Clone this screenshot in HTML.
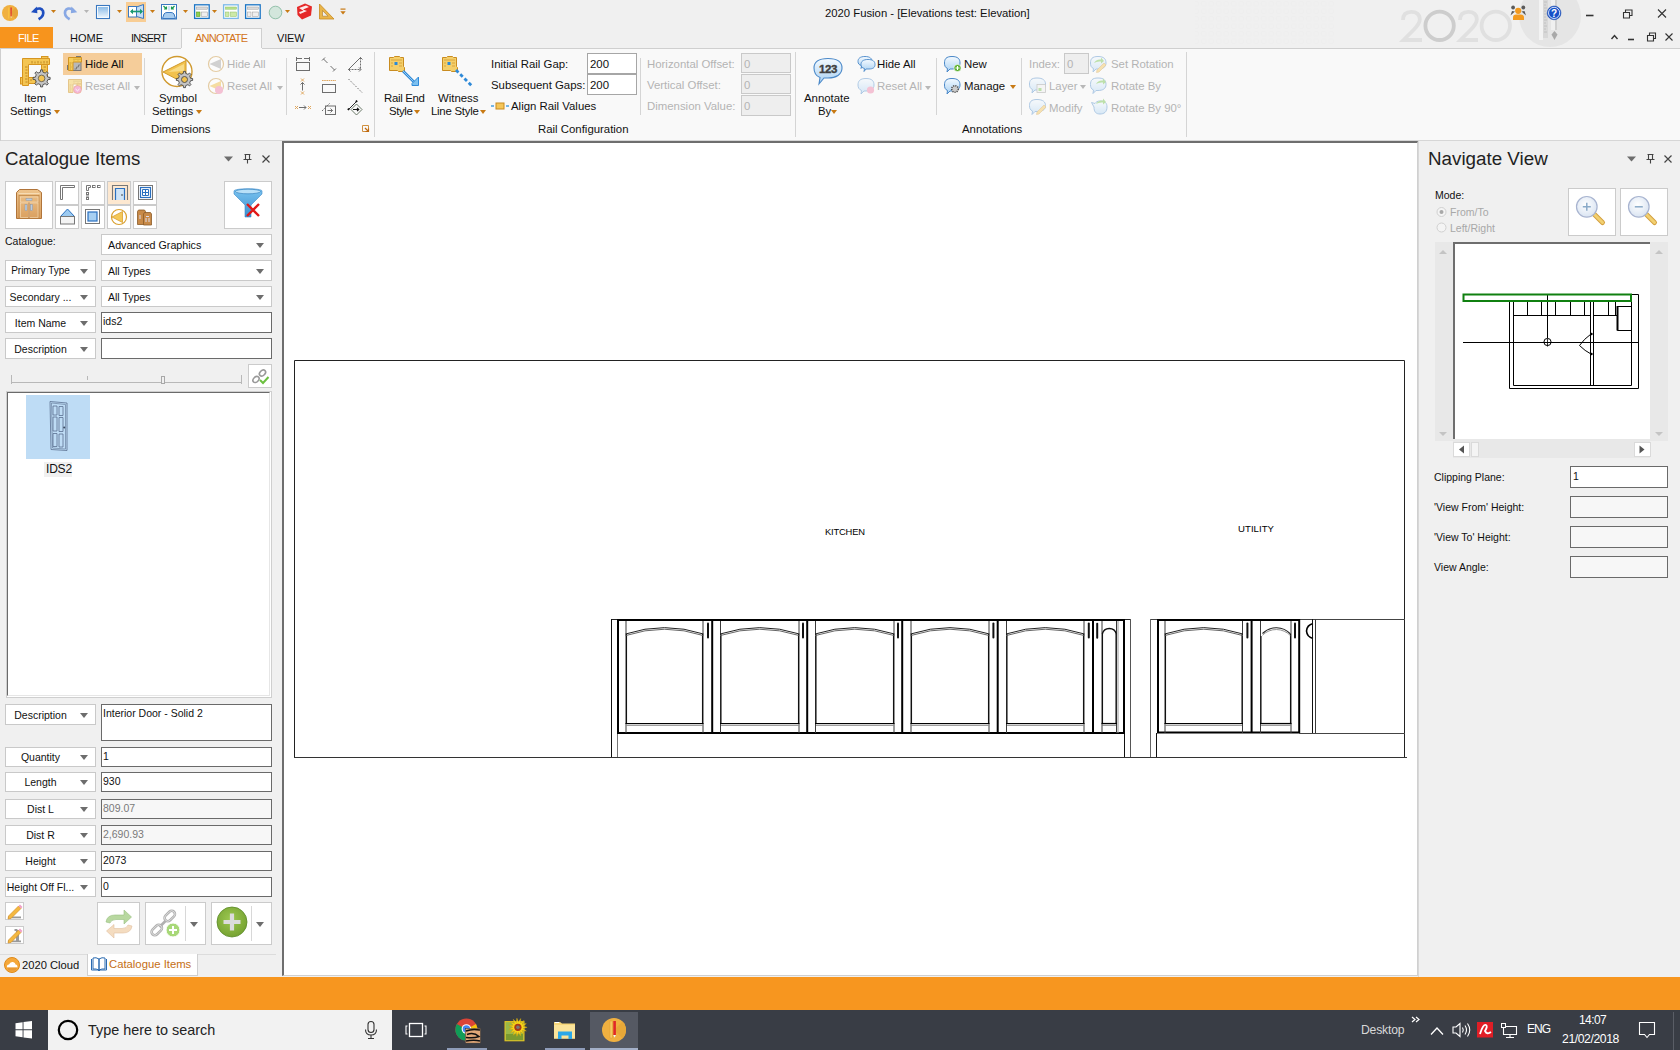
<!DOCTYPE html>
<html><head><meta charset="utf-8">
<style>
*{box-sizing:border-box;margin:0;padding:0}
html,body{width:1680px;height:1050px;overflow:hidden;background:#f0f0f0;font-family:"Liberation Sans",sans-serif;color:#111}
.a{position:absolute}
.t{position:absolute;white-space:nowrap;font-size:11.4px;line-height:14px}
.dis{color:#b4b4b4}
.sep{position:absolute;width:1px;background:#d5d5d5}
.inp{position:absolute;background:#fff;border:1px solid #7a7a7a}
.dd{position:absolute;background:#fff;border:1px solid #c9c9c9}
.arr{position:absolute;width:0;height:0;border-left:5px solid transparent;border-right:5px solid transparent;border-top:5px solid #555}
.oarr{position:absolute;width:0;height:0;border-left:3px solid transparent;border-right:3px solid transparent;border-top:3px solid #c87a14}
</style></head>
<body>
<!-- title bar -->
<div class="a" id="titlebar" style="left:0;top:0;width:1680px;height:48px;background:#f0f0f0"></div>
<div class="t" style="left:825px;top:6px;font-size:11.3px">2020 Fusion - [Elevations test: Elevation]</div>


<!-- QAT -->
<svg class="a" style="left:0;top:0" width="360" height="27" viewBox="0 0 360 27">
 <circle cx="10" cy="13" r="8" fill="#f0b040"/>
 <path d="M10 13 L15.7 7.3 A8 8 0 0 1 15.7 18.7 Z" fill="#e6a43a"/>
 <rect x="8" y="7.5" width="1.3" height="11" fill="#f8c040"/>
 <path d="M10.4 7.5 h1.4 l-.2 9 h-1z" fill="#e03030"/>
 <path d="M10.6 16.5 h1 l-.5 1.8z" fill="#fff"/>
 <path d="M31 12.3 L36.8 6.6 L37.4 13.2 Z" fill="#1f4fc0"/>
 <path d="M35.5 9.6 Q41 6.8 43 11 Q44.6 16 38.6 19.2" fill="none" stroke="#1f4fc0" stroke-width="2.7"/>
 <path d="M51 10 L56 10 L53.5 13 Z" fill="#c87a14"/>
 <path d="M77.25 12.3 L71.45 6.6 L70.85 13.2 Z" fill="#88a8e4"/>
 <path d="M72.75 9.6 Q67.25 6.8 65.25 11 Q63.65 16 69.65 19.2" fill="none" stroke="#88a8e4" stroke-width="2.7"/>
 <path d="M84 10 L89 10 L86.5 13 Z" fill="#b5b5b5"/>
 <defs><linearGradient id="qb" x1="0" y1="0" x2="0" y2="1"><stop offset="0" stop-color="#8cbce8"/><stop offset="1" stop-color="#e6f2fc"/></linearGradient></defs>
 <rect x="96.5" y="5.5" width="13" height="13" fill="#fff" stroke="#3a78c0" stroke-width="1.1"/>
 <rect x="98" y="7" width="10" height="10" fill="url(#qb)"/>
 <path d="M117 10 L122 10 L119.5 13 Z" fill="#c87a14"/>
 <rect x="126" y="2" width="20" height="20" fill="#f8cd94"/>
 <rect x="128.5" y="6.5" width="8" height="10.5" fill="#fff" stroke="#3a78c0" stroke-width="1"/>
 <path d="M136.5 7 L143.5 4.5 L143.5 18.5 L136.5 16.5 Z" fill="#c4ddf4" stroke="#3a78c0" stroke-width="1"/>
 <path d="M131 11.5 L142 11.5" stroke="#1a9a70" stroke-width="1.6"/>
 <path d="M130 11.5 L133 8.8 L133 14.2 Z M143 11.5 L140 8.8 L140 14.2 Z" fill="#1a9a70"/>
 <path d="M150 10 L155 10 L152.5 13 Z" fill="#c87a14"/>
 <rect x="161.5" y="4.5" width="15" height="14.5" fill="#fff" stroke="#3a78c0" stroke-width="1"/>
 <path d="M162.5 18.5 L164 14 Q165 12.5 167 12.5 L171 12.5 Q173 12.5 174 14 L175.5 18.5 Z" fill="#a8cdf0" stroke="#3a78c0" stroke-width="1"/>
 <rect x="168" y="6" width="2" height="4.5" fill="#cfe2f4"/>
 <path d="M163.5 6 L166.5 9 M166.5 6.5 v2.5 h-2.5 M174.5 6 L171.5 9 M171.5 6.5 v2.5 h2.5" stroke="#1a9a50" stroke-width="1.2" fill="none"/>
 <path d="M183 10 L188 10 L185.5 13 Z" fill="#c87a14"/>
 <rect x="194.6" y="4.8" width="14.6" height="13.6" fill="#fff" stroke="#1a74c4" stroke-width="1.3"/>
 <rect x="196.5" y="7" width="11" height="2.2" fill="#ddd" stroke="#999" stroke-width=".5"/>
 <rect x="196.5" y="12" width="3.5" height="4.5" fill="#8fd14f" stroke="#5a9a20" stroke-width=".6"/>
 <rect x="201.5" y="12" width="6" height="4.5" fill="#eee" stroke="#999" stroke-width=".5"/>
 <path d="M212 10 L217 10 L214.5 13 Z" fill="#c87a14"/>
 <rect x="223.6" y="4.8" width="14.6" height="13.6" fill="#fff" stroke="#7ab8e8" stroke-width="1.3"/>
 <rect x="225.5" y="7" width="11" height="2.2" fill="#b9e08a" stroke="#8cc060" stroke-width=".5"/>
 <rect x="225.5" y="12" width="3.5" height="4.5" fill="#cde9a8" stroke="#8cc060" stroke-width=".5"/>
 <rect x="230.5" y="12" width="6" height="4.5" fill="#cde9a8" stroke="#8cc060" stroke-width=".5"/>
 <rect x="245.6" y="4.8" width="14.6" height="13.6" fill="#fff" stroke="#1a74c4" stroke-width="1.3"/>
 <rect x="247.5" y="7" width="11" height="2.2" fill="#ddd" stroke="#999" stroke-width=".5"/>
 <rect x="247.5" y="12" width="3.5" height="4.5" fill="#eee" stroke="#999" stroke-width=".5"/>
 <rect x="252.5" y="12" width="6" height="4.5" fill="#eee" stroke="#999" stroke-width=".5"/>
 <circle cx="275.5" cy="12.5" r="6.3" fill="#d3e6dc" stroke="#7fb59a" stroke-width=".8"/>
 <path d="M285 10 L290 10 L287.5 13 Z" fill="#c87a14"/>
 <path d="M297 7 L305 3.5 L312 6.5 L311 15.5 L302 19.5 L297.5 15 Z" fill="#e52828"/>
 <path d="M299 8 L306 5.5 L309 7 L303 9.5 L307 11 L300 14 L299 12 L303.5 10.8 Z" fill="#fff" opacity=".9"/>
 <path d="M319.5 4 L319.5 19 L334 19 Z" fill="#e9b54a" stroke="#c88a20" stroke-width=".8"/>
 <path d="M322.5 10.5 L322.5 16.2 L328 16.2 Z" fill="#f0f0f0" stroke="#b07a20" stroke-width=".6"/>
 <rect x="340.5" y="8.5" width="5" height="1.2" fill="#c87a14"/><path d="M340.3 11.3 h5.4 l-2.7 3.2z" fill="#c87a14"/>
</svg>

<!-- tabs -->
<div class="a" style="left:0;top:27px;width:53px;height:21px;background:#f7941d"></div>
<div class="t" style="left:18px;top:31px;color:#fff;font-size:11px;letter-spacing:-0.6px">FILE</div>
<div class="t" style="left:70px;top:31px;font-size:11px">HOME</div>
<div class="t" style="left:131px;top:31px;font-size:11px;letter-spacing:-0.85px">INSERT</div>
<div class="a" style="left:181px;top:28px;width:81px;height:21px;background:#f9f9f9;border:1px solid #cfcfcf;border-bottom:none"></div>
<div class="t" style="left:195px;top:31px;font-size:11px;color:#d2741a;letter-spacing:-0.75px">ANNOTATE</div>
<div class="t" style="left:277px;top:31px;font-size:11px;letter-spacing:-0.2px">VIEW</div>

<!-- ribbon -->
<div class="a" style="left:0;top:48px;width:1680px;height:93px;background:#f9f9f9;border-top:1px solid #cfcfcf;border-bottom:1px solid #d6d6d6"></div>
<div class="a" style="left:181px;top:48px;width:81px;height:2px;background:#f9f9f9"></div>


<!-- ribbon content -->
<div class="a" style="left:0;top:48px;width:1px;height:93px;background:#cfcfcf"></div>
<!-- Item settings -->
<svg class="a" style="left:18px;top:54px" width="36" height="36" viewBox="0 0 36 36">
 <g fill="#f4c552" stroke="#d69520" stroke-width="1">
  <rect x="23.5" y="2.5" width="6.5" height="2.5"/>
  <rect x="2.5" y="23.5" width="2.5" height="6.5"/>
  <path d="M4.5 4.5 H31.5 V10.5 H10.5 V31.5 H4.5 Z"/>
  <path d="M23.5 10.5 H29.5 V26 H23.5Z"/>
  <path d="M10.5 23.5 H18 V29.5 H10.5Z"/>
 </g>
 <path d="M14 7 v2.5 M17 7.5 v2 M20 7 v2.5 M23 7.5 v2 M26 7 v2.5 M29 7 v2.5 M7 13 h2.5 M7.5 16 h2 M7 19 h2.5 M7.5 22 h2 M7 25 h2.5 M7.5 28 h2 M25.5 13 h2.5 M25.5 16 h2 M13 27 v-2" stroke="#b27818" stroke-width=".8"/>
 <path d="M29.88 23.15 L32.14 23.39 L32.14 25.41 L29.88 25.65 L28.92 27.96 L30.35 29.72 L28.92 31.15 L27.16 29.72 L24.85 30.68 L24.61 32.94 L22.59 32.94 L22.35 30.68 L20.04 29.72 L18.28 31.15 L16.85 29.72 L18.28 27.96 L17.32 25.65 L15.06 25.41 L15.06 23.39 L17.32 23.15 L18.28 20.84 L16.85 19.08 L18.28 17.65 L20.04 19.08 L22.35 18.12 L22.59 15.86 L24.61 15.86 L24.85 18.12 L27.16 19.08 L28.92 17.65 L30.35 19.08 L28.92 20.84 Z" fill="#c4c4c4" stroke="#3a3a3a" stroke-width="0.8"/>
 <circle cx="23.6" cy="24.4" r="3.3" fill="#f4c552" stroke="#555" stroke-width=".8"/>
</svg>
<div class="t" style="left:24px;top:91px">Item</div>
<div class="t" style="left:10px;top:104px">Settings</div>
<div class="oarr" style="left:54px;top:110px;border-width:4px 3px 0 3px"></div>

<div class="a" style="left:63px;top:53px;width:79px;height:22px;background:#f5cd9a"></div>
<svg class="a" style="left:66px;top:55px" width="18" height="18" viewBox="0 0 18 18">
 <rect x="10" y="1" width="5" height="1.5" fill="#777"/>
 <rect x="1" y="10" width="1.5" height="5" fill="#777"/>
 <rect x="6.5" y="6.5" width="8.5" height="9" fill="#b8b8b8" stroke="#707070" stroke-width=".9"/>
 <path d="M8.5 14 h2 v-2 h2 v-2 h1.5" fill="none" stroke="#777" stroke-width=".9"/>
 <path d="M2.5 2.5 H15.5 V7 H7 V15.5 H2.5 Z" fill="#f6cd5a" stroke="#d29420" stroke-width="1"/>
 <path d="M8 3.5 v2 M10 3.5 v1.5 M12 3.5 v2 M14 3.5 v1.5 M3.5 8 h2 M3.5 10 h1.5 M3.5 12 h2 M3.5 14 h1.5" stroke="#b27818" stroke-width=".6"/>
</svg>
<div class="t" style="left:85px;top:57px">Hide All</div>
<svg class="a" style="left:66px;top:77px;opacity:.5" width="18" height="18" viewBox="0 0 18 18">
 <path d="M2.5 2.5 H15.5 V7 H7 V15.5 H2.5 Z" fill="#f6cd5a" stroke="#d29420" stroke-width="1"/>
 <rect x="11" y="7" width="4.5" height="5" fill="#f6cd5a" stroke="#d29420" stroke-width="1"/>
 <path d="M8 3.5 v2 M10 3.5 v1.5 M12 3.5 v2 M14 3.5 v1.5 M3.5 8 h2 M3.5 10 h1.5 M3.5 12 h2 M3.5 14 h1.5" stroke="#b27818" stroke-width=".6"/>
 <circle cx="11.5" cy="12.5" r="4" fill="#f078b8" stroke="#e05a10" stroke-width=".6"/>
 <path d="M9.5 12 l2 1.8 l2 -1.8" stroke="#fff" stroke-width="1" fill="none"/>
</svg>
<div class="t dis" style="left:85px;top:79px">Reset All</div>
<div class="arr" style="left:134px;top:86px;border-width:4px 3px 0 3px;border-top-color:#b8b8b8"></div>
<div class="sep" style="left:144px;top:58px;height:57px"></div>

<!-- Symbol settings -->
<svg class="a" style="left:159px;top:54px" width="38" height="38" viewBox="0 0 38 38">
 <circle cx="18" cy="17.5" r="15" fill="#fff" stroke="#d09a30" stroke-width="1.4"/>
 <path d="M4 18 L27 6.5 L27 30 Z" fill="#f2c24e" stroke="#d09a2a" stroke-width="1"/><path d="M9 18 L25 10 L25 17Z" fill="#f8dc88"/>
 <path d="M31.58 24.29 L33.64 24.54 L33.64 26.46 L31.58 26.71 L30.66 28.94 L31.94 30.58 L30.58 31.94 L28.94 30.66 L26.71 31.58 L26.46 33.64 L24.54 33.64 L24.29 31.58 L22.06 30.66 L20.42 31.94 L19.06 30.58 L20.34 28.94 L19.42 26.71 L17.36 26.46 L17.36 24.54 L19.42 24.29 L20.34 22.06 L19.06 20.42 L20.42 19.06 L22.06 20.34 L24.29 19.42 L24.54 17.36 L26.46 17.36 L26.71 19.42 L28.94 20.34 L30.58 19.06 L31.94 20.42 L30.66 22.06 Z" fill="#c4c4c4" stroke="#3a3a3a" stroke-width="0.8"/>
 <circle cx="25.5" cy="25.5" r="3" fill="#f2c24e" stroke="#555" stroke-width="1"/>
</svg>
<div class="t" style="left:159px;top:91px">Symbol</div>
<div class="t" style="left:152px;top:104px">Settings</div>
<div class="oarr" style="left:196px;top:110px;border-width:4px 3px 0 3px"></div>
<svg class="a" style="left:207px;top:55px;opacity:.5" width="18" height="18" viewBox="0 0 18 18">
 <circle cx="9" cy="9" r="7.5" fill="#fff" stroke="#d0a050" stroke-width="1.2"/>
 <path d="M2.5 9 L14 4 L14 14 Z" fill="#aaa"/>
</svg>
<div class="t dis" style="left:227px;top:57px">Hide All</div>
<svg class="a" style="left:207px;top:77px;opacity:.5" width="18" height="18" viewBox="0 0 18 18">
 <circle cx="9" cy="9" r="7.5" fill="#fff" stroke="#d0a050" stroke-width="1.2"/>
 <path d="M2.5 9 L14 4 L14 14 Z" fill="#f2c24e"/>
 <circle cx="12" cy="13" r="4" fill="#f08ab0"/>
</svg>
<div class="t dis" style="left:227px;top:79px">Reset All</div>
<div class="arr" style="left:277px;top:86px;border-width:4px 3px 0 3px;border-top-color:#b8b8b8"></div>
<div class="sep" style="left:286px;top:58px;height:57px"></div>

<svg class="a" style="left:290px;top:52px" width="80" height="82" viewBox="290 52 80 82">
 <g fill="none" stroke="#6e6e6e" stroke-width="1">
  <path d="M296.5 57 v4 M309.5 57 v4 M296.5 58.5 h5.5 M304 58.5 h5.5"/>
  <rect x="296.5" y="62.5" width="13" height="8"/>
  <path d="M322 60.5 l3 -3 M323.5 59 l4 4 M330.5 66 l4 4 M333 71.5 l3 -3"/>
  <path d="M348.5 69.5 L360.5 57.5"/>
  <path d="M348.5 69.5 h12.5 M360.5 57.5 v12" stroke-dasharray="2 1"/>
  <path d="M350.5 67.5 l-2 2 l2 2 M358.5 59.5 l2 -2 l2 2 M359 67.5 l2 2 l-2 2"/>
  <path d="M302.5 90.5 v-8 M300.5 84.5 l2 -2 l2 2"/>
  <rect x="322.5" y="84.5" width="13" height="8"/>
  <path d="M348.5 79 L362.5 93" stroke-dasharray="1.6 1.6"/>
  <path d="M299 107.5 h7 M304 105.5 l2 2 l-2 2"/>
  <rect x="325.5" y="106" width="10" height="8.5"/>
  <path d="M327.5 110.5 h5 M330.5 108.5 l2 2 l-2 2"/>
  <path d="M322 111 L330 103" stroke-dasharray="1.5 .8"/>
 </g>
 <g stroke="#e0a860" stroke-width="1">
  <path d="M301 78.5 l3 3 M304 78.5 l-3 3 M301 91.5 l3 3 M304 91.5 l-3 3"/>
  <path d="M295 106 l3 3 M298 106 l-3 3 M308 106 l3 3 M311 106 l-3 3"/>
  <path d="M322 80.5 h14" stroke-dasharray="1.6 .6"/>
 </g>
 <path d="M351 109.5 L356.5 104 L362 109.5 L356.5 115 Z" fill="none" stroke="#5a6a58" stroke-width=".9"/>
 <path d="M353 109.5 h6 M357 107.8 l1.8 1.7 l-1.8 1.7" stroke="#111" stroke-width="1.1" fill="none"/>
 <path d="M349 109 L356.5 101.5" stroke="#111" stroke-width=".9"/>
 <path d="M348.5 108 l1.3 1.3 l-1.3 1.3 l-1.3 -1.3z M356.5 100 l1.3 1.3 l-1.3 1.3 l-1.3 -1.3z" fill="#111"/>
 <path d="M362.5 125.5 h6 v6 h-6 z" fill="none" stroke="#d09040" stroke-width="1"/>
 <path d="M365 128 l3.5 3.5 M368.5 128.5 v3 h-3" stroke="#c06a10" stroke-width="1.2" fill="none"/>
</svg>
<div class="t" style="left:151px;top:122px">Dimensions</div>
<div class="sep" style="left:374px;top:52px;height:85px"></div>


<!-- Rail configuration -->
<svg class="a" style="left:385px;top:52px" width="100" height="40" viewBox="385 52 100 40">
 <g>
  <path d="M389.5 57.5 h4 l1 -1 h5 l1 1 h3 v9 l1 1 v4 h-6 l-1 -1 h-8 z" fill="#f4cf6a" stroke="#c98c20" stroke-width="1"/>
  <path d="M391 60 h11 M391 63 h2 M391 66 h2 M399 63 h3 M399 66 h3" stroke="#c98c20" stroke-width=".6"/>
  <rect x="394.5" y="62" width="3" height="3" fill="#2a8ad8"/>
  <path d="M403 71 L416 84" stroke="#2f8ad8" stroke-width="2.6"/>
  <path d="M403 71 L416 84" stroke="#9fd0f5" stroke-width=".9"/>
  <path d="M412 83.5 L418.5 77 L418.5 85.5 L412 85.5 Z" fill="#7cc0f0" stroke="#2f8ad8" stroke-width="1"/>
 </g>
 <g>
  <path d="M442.5 57.5 h4 l1 -1 h5 l1 1 h3 v9 l1 1 v4 h-6 l-1 -1 h-8 z" fill="#f4cf6a" stroke="#c98c20" stroke-width="1"/>
  <path d="M444 60 h11 M444 63 h2 M444 66 h2 M452 63 h3 M452 66 h3" stroke="#c98c20" stroke-width=".6"/>
  <rect x="447.5" y="62" width="3" height="3" fill="#2a8ad8"/>
  <path d="M456 70 L472 86" stroke="#2f8ad8" stroke-width="2.8" stroke-dasharray="3.5 2.5"/>
 </g>
</svg>
<div class="t" style="left:384px;top:91px;letter-spacing:-0.3px">Rail End</div>
<div class="t" style="left:389px;top:104px;letter-spacing:-0.4px">Style</div>
<div class="oarr" style="left:414px;top:110px;border-width:4px 3px 0 3px"></div>
<div class="t" style="left:438px;top:91px">Witness</div>
<div class="t" style="left:431px;top:104px;letter-spacing:-0.25px">Line Style</div>
<div class="oarr" style="left:480px;top:110px;border-width:4px 3px 0 3px"></div>

<div class="t" style="left:491px;top:57px">Initial Rail Gap:</div>
<div class="t" style="left:491px;top:78px">Subsequent Gaps:</div>
<div class="inp" style="left:587px;top:53px;width:50px;height:21px;border-color:#a6a6a6"></div>
<div class="inp" style="left:587px;top:74px;width:50px;height:21px;border-color:#a6a6a6"></div>
<div class="t" style="left:590px;top:57px">200</div>
<div class="t" style="left:590px;top:78px">200</div>
<svg class="a" style="left:490px;top:100px" width="20" height="12" viewBox="0 0 20 12">
 <path d="M1 6 h3 M16 6 h3" stroke="#4aa0e0" stroke-width="1.4"/>
 <rect x="6" y="3" width="8" height="6" fill="#f4c65a" stroke="#c98c20" stroke-width="1"/>
</svg>
<div class="t" style="left:511px;top:99px">Align Rail Values</div>
<div class="sep" style="left:640px;top:58px;height:57px"></div>
<div class="t dis" style="left:647px;top:57px">Horizontal Offset:</div>
<div class="t dis" style="left:647px;top:78px">Vertical Offset:</div>
<div class="t dis" style="left:647px;top:99px">Dimension Value:</div>
<div class="a" style="left:741px;top:53px;width:50px;height:20px;background:#eeeeee;border:1px solid #c9c9c9"></div>
<div class="a" style="left:741px;top:74px;width:50px;height:20px;background:#eeeeee;border:1px solid #c9c9c9"></div>
<div class="a" style="left:741px;top:95px;width:50px;height:21px;background:#eeeeee;border:1px solid #c9c9c9"></div>
<div class="t dis" style="left:744px;top:57px">0</div>
<div class="t dis" style="left:744px;top:78px">0</div>
<div class="t dis" style="left:744px;top:99px">0</div>
<div class="t" style="left:538px;top:122px">Rail Configuration</div>
<div class="sep" style="left:795px;top:52px;height:85px"></div>


<!-- Annotations -->
<svg class="a" style="left:800px;top:50px" width="390" height="70" viewBox="800 50 390 70">
 <defs>
  <linearGradient id="bub" x1="0" y1="0" x2="0" y2="1"><stop offset="0" stop-color="#f4faff"/><stop offset="1" stop-color="#a8d0f2"/></linearGradient>
 </defs>
 <path d="M828 58.5 C838 58.5 842 62 842 68 C842 74.5 836 78 828 78 L824 78 L819 84 L820 77.5 C816 76 814 72.5 814 68 C814 62 818 58.5 828 58.5 Z" fill="url(#bub)" stroke="#4a88c8" stroke-width="1.1"/>
 <text x="828" y="73" font-family="Liberation Sans" font-weight="700" font-size="11.5" fill="#404040" text-anchor="middle" letter-spacing="-0.4" stroke="#404040" stroke-width=".35">123</text>
 <g fill="url(#bub)" stroke="#4a88c8" stroke-width=".9">
  <path d="M865 56.5 C870 56.5 872 58.5 872 61.5 C872 64.5 870 66 866 66 L863 66 L861 68.5 L861.5 65.5 C859 65 858 63.5 858 61.5 C858 58.5 860 56.5 865 56.5Z"/>
  <path d="M868 59.5 C873 59.5 875 61.5 875 64.5 C875 67.5 873 69 869 69 L866 69 L864 71.5 L864.5 68.5 C862 68 861 66.5 861 64.5 C861 61.5 863 59.5 868 59.5Z"/>
 </g>
 <g opacity=".45">
  <path d="M866 78.5 C872 78.5 874 81 874 85 C874 89 871 91 866 91 L864 91 L861 94 L861.5 90.5 C859 89.5 858 87.5 858 85 C858 81 860 78.5 866 78.5Z" fill="url(#bub)" stroke="#4a88c8" stroke-width=".9"/>
  <circle cx="870.5" cy="90" r="3.6" fill="#f080a8"/>
 </g>
 <path d="M952 56.5 C958 56.5 960 59 960 63 C960 67 957 69 952 69 L950 69 L947 72 L947.5 68.5 C945 67.5 944.5 65.5 944.5 63 C944.5 59 946 56.5 952 56.5Z" fill="url(#bub)" stroke="#4a88c8" stroke-width="1"/>
 <circle cx="957.5" cy="68" r="3.6" fill="#5cb030" stroke="#fff" stroke-width=".6"/>
 <path d="M955.5 68 h4 M957.5 66 v4" stroke="#fff" stroke-width="1.1"/>
 <path d="M952 78.5 C958 78.5 960 81 960 85 C960 89 957 91 952 91 L950 91 L947 94 L947.5 90.5 C945 89.5 944.5 87.5 944.5 85 C944.5 81 946 78.5 952 78.5Z" fill="url(#bub)" stroke="#4a88c8" stroke-width="1"/>
 <circle cx="955" cy="89" r="3.3" fill="#ccc" stroke="#555" stroke-width="1.6" stroke-dasharray="1.2 1"/>
 <g opacity=".42">
  <path d="M1098 56.5 C1104 56.5 1106 59 1106 63 C1106 67 1103 69 1098 69 L1096 69 L1093 72 L1093.5 68.5 C1091 67.5 1090.5 65.5 1090.5 63 C1090.5 59 1092 56.5 1098 56.5Z" fill="url(#bub)" stroke="#4a88c8" stroke-width="1"/>
  <path d="M1094 63 Q1096 59 1101 59.5 L1101 57.5 L1104 61 L1101 63.5 L1101 61.5 Q1097 61 1094 63Z" fill="#6cc040"/>
  <path d="M1097 70 L1104 63 L1106 65 L1099 72 L1096.5 72.5Z" fill="#f2c24e" stroke="#c98c20" stroke-width=".6"/>
  <path d="M1037 78 C1043 78 1045.5 80.5 1045.5 84 C1045.5 88 1043 90 1037 90 L1035 90 L1032 93 L1032.5 89.5 C1030 88.5 1029.5 86.5 1029.5 84 C1029.5 80.5 1031 78 1037 78Z" fill="url(#bub)" stroke="#4a88c8" stroke-width="1"/>
  <rect x="1037" y="84.5" width="8.5" height="8" fill="#eee" stroke="#888" stroke-width=".8"/>
  <rect x="1038.5" y="88" width="3" height="3" fill="#6cc040"/>
  <path d="M1098 78 C1104 78 1106 80.5 1106 84.5 C1106 88.5 1103 90.5 1098 90.5 L1096 90.5 L1093 93.5 L1093.5 90 C1091 89 1090.5 87 1090.5 84.5 C1090.5 80.5 1092 78 1098 78Z" fill="url(#bub)" stroke="#4a88c8" stroke-width="1"/>
  <path d="M1096 84 Q1098 80 1103 80.5 L1103 78.5 L1106 82 L1103 84.5 L1103 82.5 Q1099 82 1096 84Z" fill="#6cc040"/>
  <path d="M1037 99.5 C1043 99.5 1045.5 102 1045.5 105.5 C1045.5 109.5 1043 111.5 1037 111.5 L1035 111.5 L1032 114.5 L1032.5 111 C1030 110 1029.5 108 1029.5 105.5 C1029.5 102 1031 99.5 1037 99.5Z" fill="url(#bub)" stroke="#4a88c8" stroke-width="1"/>
  <path d="M1037 112 L1044 105 L1046 107 L1039 114 L1036.5 114.5Z" fill="#f2c24e" stroke="#c98c20" stroke-width=".6"/>
  <path d="M1100 101 C1105 101 1107 103 1107 107 C1107 112 1104 114 1100 114 C1096 114 1094 112 1094 107 L1091.5 102.5 L1095 103.5 C1096 102 1097.5 101 1100 101Z" fill="url(#bub)" stroke="#4a88c8" stroke-width="1"/>
  <path d="M1096 104 Q1098 100 1103 100.5 L1103 98.5 L1106 102 L1103 104.5 L1103 102.5 Q1099 102 1096 104Z" fill="#6cc040"/>
 </g>
</svg>
<div class="t" style="left:804px;top:91px">Annotate</div>
<div class="t" style="left:818px;top:104px">By</div>
<div class="oarr" style="left:831px;top:110px;border-width:4px 3px 0 3px"></div>
<div class="t" style="left:877px;top:57px">Hide All</div>
<div class="t dis" style="left:877px;top:79px">Reset All</div>
<div class="arr" style="left:925px;top:86px;border-width:4px 3px 0 3px;border-top-color:#b8b8b8"></div>
<div class="sep" style="left:936px;top:58px;height:57px"></div>
<div class="t" style="left:964px;top:57px">New</div>
<div class="t" style="left:964px;top:79px">Manage</div>
<div class="oarr" style="left:1010px;top:85px;border-width:4px 3px 0 3px"></div>
<div class="sep" style="left:1021px;top:58px;height:57px"></div>
<div class="t dis" style="left:1029px;top:57px">Index:</div>
<div class="a" style="left:1064px;top:53px;width:25px;height:21px;background:#eeeeee;border:1px solid #c9c9c9"></div>
<div class="t dis" style="left:1067px;top:57px">0</div>
<div class="t dis" style="left:1111px;top:57px">Set Rotation</div>
<div class="t dis" style="left:1049px;top:79px">Layer</div>
<div class="arr" style="left:1080px;top:85px;border-width:4px 3px 0 3px;border-top-color:#b8b8b8"></div>
<div class="t dis" style="left:1111px;top:79px">Rotate By</div>
<div class="t dis" style="left:1049px;top:101px">Modify</div>
<div class="t dis" style="left:1111px;top:101px">Rotate By 90°</div>
<div class="t" style="left:962px;top:122px">Annotations</div>
<div class="sep" style="left:1186px;top:52px;height:85px"></div>

<!-- title right -->
<svg class="a" style="left:1190px;top:0" width="490" height="48" viewBox="1190 0 490 48">
 <defs><pattern id="dots" width="7.5" height="7.5" patternUnits="userSpaceOnUse"><circle cx="3.7" cy="3.7" r="2.6" fill="none" stroke="#e8e8e8" stroke-width=".6"/></pattern></defs>
 <rect x="1195" y="0" width="140" height="46" fill="url(#dots)" opacity=".45"/>
 <circle cx="1550" cy="16" r="31" fill="#e5e5e5"/>
 <path d="M1539 0 h4 v40 h-4z" fill="#f3f3f3"/>
 <path d="M1543 0 h5 v38 h-5z" fill="#d8d8d8"/>
 <path d="M1544 2 h3 M1544 5 h2 M1544 8 h3 M1544 11 h2 M1544 14 h3 M1544 17 h2 M1544 20 h3 M1544 23 h2 M1544 26 h3 M1544 29 h2 M1544 32 h3" stroke="#bdbdbd" stroke-width=".8"/>
 <path d="M1551 0 h4 v30 h-4z" fill="#f0f0f0"/>
 <path d="M1555 0 h2 v30 h-2z" fill="#d0d0d0"/>
 <path d="M1554.5 31 l3 3.5 l-3 5.5 l-3 -5.5z" fill="#a8a8a8"/>
 <path d="M1403 20 C1403 14 1406.5 11.8 1411.3 11.8 C1416.5 11.8 1419.8 14.5 1419.8 19.5 C1419.8 23.5 1417 26.5 1413.5 30 L1403.5 40 H1422" fill="none" stroke="#e0e0e0" stroke-width="3.8" stroke-linejoin="miter"/>
 <circle cx="1439.6" cy="25.8" r="14.2" fill="none" stroke="#cdcdcd" stroke-width="3.8"/>
 <path d="M1460 20 C1460 14 1463.5 11.8 1468.3 11.8 C1473.5 11.8 1476.8 14.5 1476.8 19.5 C1476.8 23.5 1474 26.5 1470.5 30 L1460.5 40 H1478" fill="none" stroke="#e0e0e0" stroke-width="3.8" stroke-linejoin="miter"/>
 <circle cx="1495.8" cy="25.8" r="14.2" fill="none" stroke="#e0e0e0" stroke-width="3.8"/>
 <circle cx="1513.1" cy="7.5" r="1.9" fill="#5a5a5a"/><circle cx="1523.3" cy="7.5" r="1.9" fill="#5a5a5a"/>
 <path d="M1510.5 15.5 L1512 11 L1515 11.5Z M1526 15.5 L1524.5 11 L1521.5 11.5Z" fill="#5a5a5a"/>
 <circle cx="1518.2" cy="10.8" r="3.1" fill="#f39a1e"/>
 <path d="M1513 20 L1513 17.5 Q1513 14.5 1516 14.5 L1520.5 14.5 Q1524 14.5 1524 17.5 L1524 20Z" fill="#f39a1e"/>
 <circle cx="1554.1" cy="12.9" r="6.9" fill="#1850c8" stroke="#1a4aa8" stroke-width=".5"/>
 <circle cx="1554.1" cy="12.9" r="5.6" fill="none" stroke="#e8f0ff" stroke-width=".9"/>
 <text x="1554.1" y="16.8" font-family="Liberation Sans" font-weight="bold" font-size="10" fill="#fff" text-anchor="middle">?</text>
 <g stroke="#333" stroke-width="1.1" fill="none">
  <path d="M1586 15.5 h7.5" stroke-width="1.6"/>
  <path d="M1623.5 12.5 h6 v5.5 h-6 z M1625.5 12.5 v-2.5 h6.5 v5.5 h-2.5"/>
  <path d="M1658 9.5 l8 8 M1666 9.5 l-8 8"/>
  <path d="M1611.5 39 l3 -3.5 l3 3.5" stroke-width="1.4"/>
  <path d="M1628 39.5 h6" stroke-width="1.6"/>
  <path d="M1647.5 35.5 h6 v5.5 h-6 z M1649.5 35.5 v-2.5 h6 v5.5 h-2.5"/>
  <path d="M1665.5 33.5 l7 7 M1672.5 33.5 l-7 7"/>
 </g>
</svg>

<!-- left panel -->
<div class="a" style="left:0;top:141px;width:281px;height:836px;background:#f0f0f0"></div>
<div class="t" style="left:5px;top:148px;font-size:18.6px;line-height:22px;color:#222">Catalogue Items</div>


<!-- left panel content -->
<svg class="a" style="left:222px;top:150px" width="52" height="16" viewBox="222 150 52 16">
 <path d="M224 156.5 h9 l-4.5 5z" fill="#6d6d6d"/>
 <path d="M244.5 154.5 h6 M245.5 154.5 v5 M249.5 154.5 v5 M243.5 159.5 h8 M247.5 159.5 v4" stroke="#444" stroke-width="1.1" fill="none"/>
 <path d="M262.5 155.5 l7 7 M269.5 155.5 l-7 7" stroke="#444" stroke-width="1.2"/>
</svg>
<div class="a" style="left:5px;top:181px;width:48px;height:48px;background:#fff;border:1px solid #cbcbcb"></div>
<svg class="a" style="left:14px;top:189px" width="30" height="32" viewBox="0 0 30 32">
 <defs><linearGradient id="wood" x1="0" y1="0" x2="0" y2="1"><stop offset="0" stop-color="#eec48c"/><stop offset="1" stop-color="#daa060"/></linearGradient></defs>
 <path d="M2.5 3.5 L5.5 0.5 H23.5 L27.5 3.5 V29.5 H2.5 Z" fill="url(#wood)" stroke="#b0743a" stroke-width="1"/>
 <path d="M4.5 4.5 H25.5" stroke="#f6dcb4" stroke-width="1"/>
 <rect x="5" y="6.5" width="20" height="22.5" fill="none" stroke="#c08848" stroke-width=".8"/>
 <rect x="6.5" y="8" width="17.5" height="5" fill="none" stroke="#f4d8b0" stroke-width=".7"/>
 <rect x="6.5" y="14" width="8" height="14.5" fill="none" stroke="#f4d8b0" stroke-width=".7"/>
 <rect x="15.5" y="14" width="8.5" height="14.5" fill="none" stroke="#f4d8b0" stroke-width=".7"/>
 <path d="M15 13.5 V29" stroke="#b0743a" stroke-width=".9"/>
 <rect x="12" y="9.5" width="6" height="2" fill="#b8cce0" stroke="#8090a8" stroke-width=".4"/>
 <rect x="11" y="15.5" width="2" height="6" fill="#b8cce0" stroke="#8090a8" stroke-width=".4"/>
 <rect x="16.5" y="15.5" width="2" height="6" fill="#b8cce0" stroke="#8090a8" stroke-width=".4"/>
</svg>
<div class="a" style="left:55px;top:181px;width:24px;height:24px;background:#fff;border:1px solid #cbcbcb"></div>
<div class="a" style="left:81px;top:181px;width:24px;height:24px;background:#fff;border:1px solid #cbcbcb"></div>
<div class="a" style="left:107px;top:181px;width:24px;height:24px;background:#fde8d0;border:1px solid #cbcbcb"></div>
<div class="a" style="left:133px;top:181px;width:24px;height:24px;background:#fff;border:1px solid #cbcbcb"></div>
<div class="a" style="left:55px;top:205px;width:24px;height:24px;background:#fff;border:1px solid #cbcbcb"></div>
<div class="a" style="left:81px;top:205px;width:24px;height:24px;background:#fff;border:1px solid #cbcbcb"></div>
<div class="a" style="left:107px;top:205px;width:24px;height:24px;background:#fff;border:1px solid #cbcbcb"></div>
<div class="a" style="left:133px;top:205px;width:24px;height:24px;background:#fff;border:1px solid #cbcbcb"></div>
<svg class="a" style="left:55px;top:181px" width="104" height="50" viewBox="55 181 104 50">
 <path d="M60.5 199.5 v-14 h14 v2 h-12 v12 z" fill="#fff" stroke="#777" stroke-width="1"/>
 <g fill="#fff" stroke="#777" stroke-width="1">
  <path d="M86.5 190.5 v-5 h4 v2 h-2 v3z"/><rect x="92.5" y="185.5" width="2.5" height="2"/><rect x="97.5" y="185.5" width="2.5" height="2"/>
  <rect x="86.5" y="192.5" width="2" height="2.5"/><rect x="86.5" y="197" width="2" height="2.5"/>
 </g>
 <path d="M112.5 200 v-14.5 h15 v14.5" fill="none" stroke="#777" stroke-width="1.1"/>
 <path d="M115.5 200 v-11.5 h9 v11.5" fill="#cfe4f7" stroke="#2a70c0" stroke-width="1.2"/>
 <rect x="121.5" y="194" width="1" height="2" fill="#444"/>
 <rect x="138.5" y="185.5" width="14" height="14" fill="#fff" stroke="#777" stroke-width="1"/>
 <rect x="140.5" y="187.5" width="10" height="10" fill="#fff" stroke="#2a70c0" stroke-width="1.2"/>
 <path d="M142.5 189.5 h6 v6 h-6z M145.5 189.5 v6 M142.5 192.5 h6" fill="none" stroke="#2a70c0" stroke-width="1"/>
 <path d="M60.5 216.5 L67.5 209 L74.5 216.5 Z" fill="#9ccaf0" stroke="#2a70c0" stroke-width="1"/>
 <rect x="60.5" y="216.5" width="14" height="7.5" fill="#f4f4f4" stroke="#777" stroke-width="1"/>
 <rect x="85.5" y="209.5" width="14" height="14" fill="#fff" stroke="#777" stroke-width="1"/>
 <rect x="88" y="212" width="9" height="9" fill="#a8d0f2" stroke="#2a70c0" stroke-width="1.2"/>
 <circle cx="119" cy="217" r="7.5" fill="#fff" stroke="#d9a030" stroke-width="1.2"/>
 <path d="M112 217 L122.5 211.5 L122.5 222.5 Z" fill="#f4c858" stroke="#d9a030" stroke-width=".8"/>
 <g fill="#c88a48" stroke="#8a5a28" stroke-width=".8">
  <path d="M137.5 211.5 l1 -1.5 h6 l1 1.5 v13 h-8z"/>
  <path d="M143.5 214 l1 -1.5 h6 l1 1.5 v11 h-8z"/>
 </g>
 <rect x="146" y="216" width="3" height="1" fill="#dde"/>
 <path d="M146 218 v4 M149 218 v4 M140 215 v4" stroke="#dde" stroke-width="1"/>
</svg>
<div class="a" style="left:224px;top:181px;width:48px;height:48px;background:#fff;border:1px solid #cbcbcb"></div>
<svg class="a" style="left:232px;top:187px" width="32" height="34" viewBox="0 0 32 34">
 <defs><linearGradient id="fun" x1="0" y1="0" x2="0" y2="1"><stop offset="0" stop-color="#7cc4f0"/><stop offset="1" stop-color="#3a90d0"/></linearGradient></defs>
 <path d="M2 4 C2 1 30 1 30 4 L30 7 L19 18 L19 30 L13 30 L13 18 L2 7 Z" fill="url(#fun)" stroke="#3a88c8" stroke-width=".6"/>
 <ellipse cx="16" cy="4.5" rx="12.5" ry="2.3" fill="#b9e0f8" stroke="#2a78b8" stroke-width=".6"/>
 <path d="M15 17 L27 29 M27 17 L15 29" stroke="#e01818" stroke-width="2.4"/>
</svg>

<div class="t" style="left:5px;top:234px;font-size:10.5px">Catalogue:</div>
<div class="dd" style="left:101px;top:234px;width:171px;height:21px"></div>
<div class="t" style="left:108px;top:238px;font-size:10.7px">Advanced Graphics</div>
<div class="arr" style="left:256px;top:243px;border-width:5px 4.5px 0 4.5px;border-top-color:#6d6d6d"></div>

<div class="dd" style="left:5px;top:260px;width:91px;height:21px"></div>
<div class="t" style="left:5px;width:71px;text-align:center;top:264px;font-size:10px">Primary Type</div>
<div class="arr" style="left:80px;top:269px;border-width:5px 4.5px 0 4.5px;border-top-color:#6d6d6d"></div>
<div class="dd" style="left:101px;top:260px;width:171px;height:21px"></div>
<div class="t" style="left:108px;top:264px;font-size:10.5px">All Types</div>
<div class="arr" style="left:256px;top:269px;border-width:5px 4.5px 0 4.5px;border-top-color:#6d6d6d"></div>

<div class="dd" style="left:5px;top:286px;width:91px;height:21px"></div>
<div class="t" style="left:5px;width:71px;text-align:center;top:290px;font-size:10.5px">Secondary ...</div>
<div class="arr" style="left:80px;top:295px;border-width:5px 4.5px 0 4.5px;border-top-color:#6d6d6d"></div>
<div class="dd" style="left:101px;top:286px;width:171px;height:21px"></div>
<div class="t" style="left:108px;top:290px;font-size:10.5px">All Types</div>
<div class="arr" style="left:256px;top:295px;border-width:5px 4.5px 0 4.5px;border-top-color:#6d6d6d"></div>

<div class="dd" style="left:5px;top:312px;width:91px;height:21px"></div>
<div class="t" style="left:5px;width:71px;text-align:center;top:316px;font-size:10.5px">Item Name</div>
<div class="arr" style="left:80px;top:321px;border-width:5px 4.5px 0 4.5px;border-top-color:#6d6d6d"></div>
<div class="inp" style="left:101px;top:312px;width:171px;height:21px;border-color:#6a6a6a"></div>
<div class="t" style="left:103px;top:314px;font-size:10.5px">ids2</div>

<div class="dd" style="left:5px;top:338px;width:91px;height:21px"></div>
<div class="t" style="left:5px;width:71px;text-align:center;top:342px;font-size:10.5px">Description</div>
<div class="arr" style="left:80px;top:347px;border-width:5px 4.5px 0 4.5px;border-top-color:#6d6d6d"></div>
<div class="inp" style="left:101px;top:338px;width:171px;height:21px;border-color:#6a6a6a"></div>

<svg class="a" style="left:0;top:360px" width="280" height="32" viewBox="0 360 280 32">
 <path d="M11.5 375 v9 M87.5 376 v4 M241.5 375 v9 M11 382.5 h231" stroke="#b8b8b8" stroke-width="1" fill="none"/>
 <rect x="161.5" y="376.5" width="3" height="7" fill="#f0f0f0" stroke="#a8a8a8" stroke-width="1"/>
</svg>
<div class="a" style="left:248px;top:364px;width:24px;height:24px;background:#fff;border:1px solid #cbcbcb"></div>
<svg class="a" style="left:250px;top:366px" width="20" height="20" viewBox="0 0 20 20">
 <g fill="none" stroke="#999" stroke-width="1.6"><ellipse cx="6" cy="13.5" rx="3.5" ry="2.5" transform="rotate(-45 6 13.5)"/><ellipse cx="12.5" cy="7" rx="3.5" ry="2.5" transform="rotate(-45 12.5 7)"/></g>
 <path d="M10 14 l3 3 l5.5 -6" stroke="#6cc040" stroke-width="2" fill="none"/>
</svg>

<div class="a" style="left:6px;top:391px;width:266px;height:307px;background:#fff;border:1px solid #cfcfcf"></div>
<div class="a" style="left:7px;top:392px;width:263px;height:304px;border-left:1px solid #6a6a6a;border-top:1px solid #6a6a6a;border-right:1px solid #e6e6e6;border-bottom:1px solid #e6e6e6"></div>
<div class="a" style="left:26px;top:395px;width:64px;height:64px;background:#bedcf5"></div>
<svg class="a" style="left:48px;top:400px" width="22" height="52" viewBox="0 0 22 52">
 <g fill="none" stroke="#5a7090" stroke-width=".8">
  <path d="M2 1.5 L19 3 L19 50.5 L3 49.5 Z"/>
  <path d="M3.5 3 L17.5 4.5 L17.5 49 L4.5 48 Z" stroke-width=".6"/>
  <path d="M5 6 h4 v9 h-4z M11 6.5 h4 v9 h-4z M5 17 h4 v14 h-4z M11 17.5 h4 v14 h-4z M5 33.5 h4 v13 h-4z M11 34 h4 v13 h-4z"/>
 </g>
 <circle cx="16.2" cy="27.5" r="1" fill="#3a4a60"/>
</svg>
<div class="a" style="left:44px;top:462px;width:28px;height:15px;background:#f0f0f0"></div>
<div class="t" style="left:46px;top:462px;font-size:12px;line-height:15px;letter-spacing:-0.2px">IDS2</div>

<div class="dd" style="left:5px;top:704px;width:91px;height:21px"></div>
<div class="t" style="left:5px;width:71px;text-align:center;top:708px;font-size:10.5px">Description</div>
<div class="arr" style="left:80px;top:713px;border-width:5px 4.5px 0 4.5px;border-top-color:#6d6d6d"></div>
<div class="inp" style="left:101px;top:704px;width:171px;height:37px;border-color:#6a6a6a"></div>
<div class="t" style="left:103px;top:706px;font-size:10.5px">Interior Door - Solid 2</div>
<div class="dd" style="left:5px;top:747px;width:91px;height:20px"></div>
<div class="t" style="left:5px;width:71px;text-align:center;top:750px;font-size:10.5px">Quantity</div>
<div class="arr" style="left:80px;top:755px;border-width:5px 4.5px 0 4.5px;border-top-color:#6d6d6d"></div>
<div class="inp" style="left:101px;top:747px;width:171px;height:20px;border-color:#6a6a6a"></div>
<div class="t" style="left:103px;top:749px;font-size:10.5px">1</div>
<div class="dd" style="left:5px;top:772px;width:91px;height:20px"></div>
<div class="t" style="left:5px;width:71px;text-align:center;top:775px;font-size:10.5px">Length</div>
<div class="arr" style="left:80px;top:780px;border-width:5px 4.5px 0 4.5px;border-top-color:#6d6d6d"></div>
<div class="inp" style="left:101px;top:772px;width:171px;height:20px;border-color:#6a6a6a"></div>
<div class="t" style="left:103px;top:774px;font-size:10.5px">930</div>
<div class="dd" style="left:5px;top:799px;width:91px;height:20px"></div>
<div class="t" style="left:5px;width:71px;text-align:center;top:802px;font-size:10.5px">Dist L</div>
<div class="arr" style="left:80px;top:807px;border-width:5px 4.5px 0 4.5px;border-top-color:#6d6d6d"></div>
<div class="inp" style="left:101px;top:799px;width:171px;height:20px;border-color:#6a6a6a;background:#f7f7f7"></div>
<div class="t" style="left:103px;top:801px;font-size:10.5px;color:#7a7a7a">809.07</div>
<div class="dd" style="left:5px;top:825px;width:91px;height:20px"></div>
<div class="t" style="left:5px;width:71px;text-align:center;top:828px;font-size:10.5px">Dist R</div>
<div class="arr" style="left:80px;top:833px;border-width:5px 4.5px 0 4.5px;border-top-color:#6d6d6d"></div>
<div class="inp" style="left:101px;top:825px;width:171px;height:20px;border-color:#6a6a6a;background:#f7f7f7"></div>
<div class="t" style="left:103px;top:827px;font-size:10.5px;color:#7a7a7a">2,690.93</div>
<div class="dd" style="left:5px;top:851px;width:91px;height:20px"></div>
<div class="t" style="left:5px;width:71px;text-align:center;top:854px;font-size:10.5px">Height</div>
<div class="arr" style="left:80px;top:859px;border-width:5px 4.5px 0 4.5px;border-top-color:#6d6d6d"></div>
<div class="inp" style="left:101px;top:851px;width:171px;height:20px;border-color:#6a6a6a"></div>
<div class="t" style="left:103px;top:853px;font-size:10.5px">2073</div>
<div class="dd" style="left:5px;top:877px;width:91px;height:20px"></div>
<div class="t" style="left:5px;width:71px;text-align:center;top:880px;font-size:10.5px">Height Off Fl...</div>
<div class="arr" style="left:80px;top:885px;border-width:5px 4.5px 0 4.5px;border-top-color:#6d6d6d"></div>
<div class="inp" style="left:101px;top:877px;width:171px;height:20px;border-color:#6a6a6a"></div>
<div class="t" style="left:103px;top:879px;font-size:10.5px">0</div>

<svg class="a" style="left:5px;top:902px" width="20" height="44" viewBox="0 0 20 44">
 <rect x=".5" y=".5" width="18" height="17" fill="#fff" stroke="#cbcbcb"/>
 <rect x=".5" y="24.5" width="18" height="17" fill="#fff" stroke="#cbcbcb"/>
 <path d="M3 14.5 h13 v1.8 h-13z" fill="#9a9a9a"/>
 <path d="M3.5 14 L13.5 4 L16 6.5 L6 16.5 L3 17 Z" fill="#f4b840" stroke="#d08820" stroke-width=".6"/>
 <path d="M13.5 4 L15 2.5 L17.5 5 L16 6.5Z" fill="#f0a0c8"/>
 <path d="M3 38.5 h13 v1.8 h-13z M14 38.5 v-9 l-2 -2.5 h-2.5 v2 h1.5 v9.5" fill="#9a9a9a"/>
 <path d="M3.5 38 L13.5 28 L16 30.5 L6 40.5 L3 41 Z" fill="#f4b840" stroke="#d08820" stroke-width=".6"/>
 <path d="M13.5 28 L15 26.5 L17.5 29 L16 30.5Z" fill="#f0a0c8"/>
</svg>
<div class="a" style="left:97px;top:902px;width:43px;height:43px;background:#fff;border:1px solid #cbcbcb"></div>
<svg class="a" style="left:102px;top:907px" width="34" height="34" viewBox="0 0 34 34">
 <path d="M4 15 Q5 8 13 8 L22 8 L22 3 L29.5 10 L22 17 L22 12.5 L14 12.5 Q9 12.5 8 16Z" fill="#b8d8a0" stroke="#98c080" stroke-width=".6"/>
 <path d="M30 19 Q29 26 21 26 L12 26 L12 31 L4.5 24 L12 17.5 L12 21.5 L20 21.5 Q25 21.5 26 18Z" fill="#f4dcc0" stroke="#e0c0a0" stroke-width=".6"/>
</svg>
<div class="a" style="left:145px;top:902px;width:61px;height:43px;background:#fff;border:1px solid #cbcbcb"></div>
<div class="a" style="left:185px;top:906px;width:1px;height:35px;background:#d8d8d8"></div>
<svg class="a" style="left:150px;top:906px" width="34" height="34" viewBox="0 0 34 34">
 <g fill="none" stroke="#b0b0b0" stroke-width="2.6">
  <rect x="3.5" y="18" width="6.5" height="12" rx="3.25" transform="rotate(45 6.75 24)"/>
  <rect x="16.5" y="4" width="6.5" height="12" rx="3.25" transform="rotate(45 19.75 10)"/>
  <path d="M9.5 21 L16 14.5"/>
 </g>
 <g fill="none" stroke="#e4e4e4" stroke-width=".8">
  <rect x="3.5" y="18" width="6.5" height="12" rx="3.25" transform="rotate(45 6.75 24)"/>
  <rect x="16.5" y="4" width="6.5" height="12" rx="3.25" transform="rotate(45 19.75 10)"/>
 </g>
 <circle cx="23" cy="24" r="7" fill="#a8d878" stroke="#fff" stroke-width="1"/>
 <path d="M19 24 h8 M23 20 v8" stroke="#fff" stroke-width="2"/>
</svg>
<div class="arr" style="left:190px;top:922px;border-width:5px 4.5px 0 4.5px;border-top-color:#6d6d6d"></div>
<div class="a" style="left:211px;top:902px;width:61px;height:43px;background:#fff;border:1px solid #cbcbcb"></div>
<div class="a" style="left:251px;top:906px;width:1px;height:35px;background:#d8d8d8"></div>
<svg class="a" style="left:216px;top:906px" width="33" height="33" viewBox="0 0 33 33">
 <defs><radialGradient id="grn" cx=".45" cy=".4" r=".65"><stop offset="0" stop-color="#9cc850"/><stop offset="1" stop-color="#74a030"/></radialGradient></defs>
 <circle cx="16" cy="16" r="15" fill="url(#grn)" stroke="#5a8a28" stroke-width=".8"/>
 <path d="M7.5 16 h17 M16 7.5 v17" stroke="#dcdcdc" stroke-width="4.2"/>
</svg>
<div class="arr" style="left:256px;top:922px;border-width:5px 4.5px 0 4.5px;border-top-color:#6d6d6d"></div>

<div class="a" style="left:0;top:954px;width:276px;height:1px;background:#dcdcdc"></div>
<div class="a" style="left:87px;top:954px;width:111px;height:22px;background:#fff;border:1px solid #cfcfcf;border-top:none"></div>
<svg class="a" style="left:3px;top:956px" width="18" height="18" viewBox="0 0 18 18">
 <circle cx="9" cy="9" r="7.5" fill="#f5a83a" stroke="#e08a18" stroke-width="1"/>
 <path d="M4 11.5 Q3.5 8.5 6 8.5 Q7 5.5 10 6 Q12.5 6.5 12.5 8.5 Q14.5 8.5 14.5 11.5 Z" fill="#fff"/><path d="M4 11.5 h10.5 l-2 3 h-7z" fill="#e09030" opacity=".6"/>
</svg>
<div class="t" style="left:22px;top:958px;font-size:11.2px">2020 Cloud</div>
<svg class="a" style="left:90px;top:956px" width="18" height="18" viewBox="0 0 18 18">
 <path d="M1.5 3 v11 h6.5 l1 1 l1 -1 h6.5 v-11" fill="#fff" stroke="#2a6ab0" stroke-width="1"/>
 <path d="M3 2 q3 -1 6 1 v11 q-3 -1.5 -6 -1z M15 2 q-3 -1 -6 1 v11 q3 -1.5 6 -1z" fill="#fff" stroke="#2a6ab0" stroke-width="1"/>
</svg>
<div class="t" style="left:109px;top:957px;font-size:11.3px;color:#c46e14">Catalogue Items</div>

<!-- canvas -->
<div class="a" style="left:282px;top:141px;width:1136px;height:835px;background:#fff;border-left:2px solid #6e6e6e;border-top:2px solid #6e6e6e;border-right:1px solid #d0d0d0;border-bottom:1px solid #d0d0d0"></div>

<svg class="a" style="left:284px;top:144px" width="1133" height="831" viewBox="284 144 1133 831"><path d="M294.5 757 V360.5 H1404.5 V757" fill="none" stroke="#222" stroke-width="1"/>
<line x1="294" y1="757.5" x2="1407" y2="757.5" stroke="#333" stroke-width="1.2"/>
<line x1="611" y1="619.5" x2="1131" y2="619.5" stroke="#222" stroke-width="1"/>
<line x1="617" y1="620" x2="1125" y2="620" stroke="#000" stroke-width="2"/>
<line x1="611.5" y1="619" x2="611.5" y2="757" stroke="#111" stroke-width="1"/>
<line x1="617.5" y1="733" x2="617.5" y2="757" stroke="#777" stroke-width="1"/>
<line x1="1130.5" y1="619" x2="1130.5" y2="757" stroke="#555" stroke-width="1"/>
<line x1="1124.5" y1="733" x2="1124.5" y2="757" stroke="#111" stroke-width="1"/>
<line x1="617" y1="733" x2="1125" y2="733" stroke="#000" stroke-width="2"/>
<line x1="618" y1="619" x2="618" y2="733" stroke="#000" stroke-width="2"/>
<line x1="712.2" y1="619" x2="712.2" y2="733" stroke="#000" stroke-width="2"/>
<line x1="807.2" y1="619" x2="807.2" y2="733" stroke="#000" stroke-width="2"/>
<line x1="902.2" y1="619" x2="902.2" y2="733" stroke="#000" stroke-width="2"/>
<line x1="997.7" y1="619" x2="997.7" y2="733" stroke="#000" stroke-width="2"/>
<line x1="1093" y1="619" x2="1093" y2="733" stroke="#000" stroke-width="2"/>
<line x1="1124" y1="619" x2="1124" y2="733" stroke="#000" stroke-width="2"/>
<line x1="626.0" y1="621" x2="626.0" y2="733" stroke="#3a3a3a" stroke-width="1"/>
<line x1="703.0" y1="621" x2="703.0" y2="733" stroke="#3a3a3a" stroke-width="1"/>
<line x1="626.5" y1="634" x2="626.5" y2="724" stroke="#111" stroke-width="1.1"/>
<line x1="702.5" y1="634" x2="702.5" y2="724" stroke="#111" stroke-width="1.1"/>
<line x1="625.5" y1="723.5" x2="703.5" y2="723.5" stroke="#000" stroke-width="1.2"/>
<line x1="626.5" y1="725.2" x2="702.5" y2="725.2" stroke="#666" stroke-width="0.9"/>
<path d="M625.5 634 A125.8 125.8 0 0 1 703.5 634" fill="none" stroke="#222" stroke-width="1"/>
<path d="M625.5 635.6 A125.8 125.8 0 0 1 703.5 635.6" fill="none" stroke="#555" stroke-width=".9"/>
<rect x="707" y="622.5" width="2" height="16" rx="1" fill="#111"/>
<line x1="720.5" y1="621" x2="720.5" y2="733" stroke="#3a3a3a" stroke-width="1"/>
<line x1="799.0" y1="621" x2="799.0" y2="733" stroke="#3a3a3a" stroke-width="1"/>
<line x1="721" y1="634" x2="721" y2="724" stroke="#111" stroke-width="1.1"/>
<line x1="798.5" y1="634" x2="798.5" y2="724" stroke="#111" stroke-width="1.1"/>
<line x1="720" y1="723.5" x2="799.5" y2="723.5" stroke="#000" stroke-width="1.2"/>
<line x1="721" y1="725.2" x2="798.5" y2="725.2" stroke="#666" stroke-width="0.9"/>
<path d="M720.0 634 A130.5 130.5 0 0 1 799.5 634" fill="none" stroke="#222" stroke-width="1"/>
<path d="M720.0 635.6 A130.5 130.5 0 0 1 799.5 635.6" fill="none" stroke="#555" stroke-width=".9"/>
<rect x="802" y="622.5" width="2" height="16" rx="1" fill="#111"/>
<line x1="815.5" y1="621" x2="815.5" y2="733" stroke="#3a3a3a" stroke-width="1"/>
<line x1="894.0" y1="621" x2="894.0" y2="733" stroke="#3a3a3a" stroke-width="1"/>
<line x1="816" y1="634" x2="816" y2="724" stroke="#111" stroke-width="1.1"/>
<line x1="893.5" y1="634" x2="893.5" y2="724" stroke="#111" stroke-width="1.1"/>
<line x1="815" y1="723.5" x2="894.5" y2="723.5" stroke="#000" stroke-width="1.2"/>
<line x1="816" y1="725.2" x2="893.5" y2="725.2" stroke="#666" stroke-width="0.9"/>
<path d="M815.0 634 A130.5 130.5 0 0 1 894.5 634" fill="none" stroke="#222" stroke-width="1"/>
<path d="M815.0 635.6 A130.5 130.5 0 0 1 894.5 635.6" fill="none" stroke="#555" stroke-width=".9"/>
<rect x="897" y="622.5" width="2" height="16" rx="1" fill="#111"/>
<line x1="911.0" y1="621" x2="911.0" y2="733" stroke="#3a3a3a" stroke-width="1"/>
<line x1="989.0" y1="621" x2="989.0" y2="733" stroke="#3a3a3a" stroke-width="1"/>
<line x1="911.5" y1="634" x2="911.5" y2="724" stroke="#111" stroke-width="1.1"/>
<line x1="988.5" y1="634" x2="988.5" y2="724" stroke="#111" stroke-width="1.1"/>
<line x1="910.5" y1="723.5" x2="989.5" y2="723.5" stroke="#000" stroke-width="1.2"/>
<line x1="911.5" y1="725.2" x2="988.5" y2="725.2" stroke="#666" stroke-width="0.9"/>
<path d="M910.5 634 A128.9 128.9 0 0 1 989.5 634" fill="none" stroke="#222" stroke-width="1"/>
<path d="M910.5 635.6 A128.9 128.9 0 0 1 989.5 635.6" fill="none" stroke="#555" stroke-width=".9"/>
<rect x="992.4" y="622.5" width="2" height="16" rx="1" fill="#111"/>
<line x1="1006.5" y1="621" x2="1006.5" y2="733" stroke="#3a3a3a" stroke-width="1"/>
<line x1="1084.0" y1="621" x2="1084.0" y2="733" stroke="#3a3a3a" stroke-width="1"/>
<line x1="1007" y1="634" x2="1007" y2="724" stroke="#111" stroke-width="1.1"/>
<line x1="1083.5" y1="634" x2="1083.5" y2="724" stroke="#111" stroke-width="1.1"/>
<line x1="1006" y1="723.5" x2="1084.5" y2="723.5" stroke="#000" stroke-width="1.2"/>
<line x1="1007" y1="725.2" x2="1083.5" y2="725.2" stroke="#666" stroke-width="0.9"/>
<path d="M1006.0 634 A127.3 127.3 0 0 1 1084.5 634" fill="none" stroke="#222" stroke-width="1"/>
<path d="M1006.0 635.6 A127.3 127.3 0 0 1 1084.5 635.6" fill="none" stroke="#555" stroke-width=".9"/>
<rect x="1087.8" y="622.5" width="2" height="16" rx="1" fill="#111"/>
<rect x="1096.2" y="622.8" width="2" height="16" rx="1" fill="#111"/>
<line x1="1102" y1="621" x2="1102" y2="733" stroke="#3a3a3a" stroke-width="1"/>
<line x1="1116.5" y1="621" x2="1116.5" y2="733" stroke="#3a3a3a" stroke-width="1"/>
<line x1="1118" y1="621" x2="1118" y2="733" stroke="#999" stroke-width="1"/>
<line x1="1102.5" y1="634" x2="1102.5" y2="724" stroke="#111" stroke-width="1.1"/>
<line x1="1116" y1="634" x2="1116" y2="724" stroke="#111" stroke-width="1.1"/>
<line x1="1101.5" y1="723.5" x2="1117" y2="723.5" stroke="#000" stroke-width="1.2"/>
<line x1="1102" y1="725.2" x2="1116" y2="725.2" stroke="#666" stroke-width="0.9"/>
<path d="M1102.3 634 A7.2 7.2 0 0 1 1116.3 634" fill="none" stroke="#111" stroke-width="1.4"/>
<line x1="1151" y1="619.5" x2="1405" y2="619.5" stroke="#444" stroke-width="1"/>
<line x1="1157" y1="620" x2="1300" y2="620" stroke="#000" stroke-width="2"/>
<line x1="1150.5" y1="619" x2="1150.5" y2="757" stroke="#666" stroke-width="1"/>
<line x1="1156.5" y1="733" x2="1156.5" y2="757" stroke="#111" stroke-width="1"/>
<line x1="1157" y1="732.5" x2="1300" y2="732.5" stroke="#000" stroke-width="2"/>
<line x1="1299" y1="733.5" x2="1405" y2="733.5" stroke="#444" stroke-width="1"/>
<line x1="1158" y1="619" x2="1158" y2="733" stroke="#000" stroke-width="2"/>
<line x1="1251.6" y1="619" x2="1251.6" y2="733" stroke="#000" stroke-width="2"/>
<line x1="1299.2" y1="619" x2="1299.2" y2="733" stroke="#000" stroke-width="2"/>
<line x1="1165.0" y1="621" x2="1165.0" y2="733" stroke="#3a3a3a" stroke-width="1"/>
<line x1="1242.5" y1="621" x2="1242.5" y2="733" stroke="#3a3a3a" stroke-width="1"/>
<line x1="1165.5" y1="634" x2="1165.5" y2="724" stroke="#111" stroke-width="1.1"/>
<line x1="1242" y1="634" x2="1242" y2="724" stroke="#111" stroke-width="1.1"/>
<line x1="1164.5" y1="723.5" x2="1243" y2="723.5" stroke="#000" stroke-width="1.2"/>
<line x1="1165.5" y1="725.2" x2="1242" y2="725.2" stroke="#666" stroke-width="0.9"/>
<path d="M1164.5 634 A127.3 127.3 0 0 1 1243.0 634" fill="none" stroke="#222" stroke-width="1"/>
<path d="M1164.5 635.6 A127.3 127.3 0 0 1 1243.0 635.6" fill="none" stroke="#555" stroke-width=".9"/>
<rect x="1246.4" y="622.5" width="2" height="16" rx="1" fill="#111"/>
<line x1="1260.5" y1="621" x2="1260.5" y2="733" stroke="#3a3a3a" stroke-width="1"/>
<line x1="1291.0" y1="621" x2="1291.0" y2="733" stroke="#3a3a3a" stroke-width="1"/>
<line x1="1261" y1="636" x2="1261" y2="724" stroke="#111" stroke-width="1.1"/>
<line x1="1290.5" y1="634" x2="1290.5" y2="724" stroke="#111" stroke-width="1.1"/>
<line x1="1260" y1="723.5" x2="1291.5" y2="723.5" stroke="#000" stroke-width="1.2"/>
<line x1="1261" y1="725.2" x2="1290.5" y2="725.2" stroke="#666" stroke-width="0.9"/>
<path d="M1262.5 633.5 A19.5 19.5 0 0 1 1290.5 634" fill="none" stroke="#222" stroke-width="1.1"/>
<path d="M1262.5 635.2 A19.5 19.5 0 0 1 1290.5 635.7" fill="none" stroke="#777" stroke-width=".8"/>
<rect x="1294" y="622.5" width="2" height="16" rx="1" fill="#111"/>
<path d="M1313 623.5 Q1307 625 1306.5 631 Q1307 637 1313 638.5" fill="none" stroke="#000" stroke-width="1.6"/>
<line x1="1312.5" y1="619" x2="1312.5" y2="733" stroke="#111" stroke-width="1"/>
<line x1="1315.5" y1="619" x2="1315.5" y2="733" stroke="#3a3a3a" stroke-width="1"/>
<text x="825" y="535" font-family="Liberation Sans" font-size="9.4" fill="#000" textLength="40">KITCHEN</text>
<text x="1238" y="532" font-family="Liberation Sans" font-size="9.6" fill="#000" textLength="36">UTILITY</text></svg>
<!-- right panel -->
<div class="a" style="left:1418px;top:141px;width:262px;height:836px;background:#f0f0f0;border-left:1px solid #d8d8d8"></div>
<div class="t" style="left:1428px;top:148px;font-size:18.8px;line-height:22px;color:#222">Navigate View</div>


<!-- right panel content -->
<svg class="a" style="left:1620px;top:150px" width="60" height="16" viewBox="1620 150 60 16">
 <path d="M1627 156.5 h9 l-4.5 5z" fill="#6d6d6d"/>
 <path d="M1647.5 154.5 h6 M1648.5 154.5 v5 M1652.5 154.5 v5 M1646.5 159.5 h8 M1650.5 159.5 v4" stroke="#444" stroke-width="1.1" fill="none"/>
 <path d="M1664.5 155.5 l7 7 M1671.5 155.5 l-7 7" stroke="#444" stroke-width="1.2"/>
</svg>
<div class="t" style="left:1435px;top:188px;font-size:10.5px">Mode:</div>
<svg class="a" style="left:1435px;top:206px" width="14" height="28" viewBox="0 0 14 28">
 <circle cx="6.5" cy="6" r="4.5" fill="#f4f4f4" stroke="#d0d0d0" stroke-width="1"/>
 <circle cx="6.5" cy="6" r="2" fill="#a8a8a8"/>
 <circle cx="6.5" cy="21.5" r="4.5" fill="#f4f4f4" stroke="#d0d0d0" stroke-width="1"/>
</svg>
<div class="t" style="left:1450px;top:205px;font-size:10.5px;color:#a8a8a8">From/To</div>
<div class="t" style="left:1450px;top:221px;font-size:10.5px;color:#a8a8a8">Left/Right</div>
<div class="a" style="left:1568px;top:188px;width:48px;height:48px;background:#fff;border:1px solid #cbcbcb"></div>
<div class="a" style="left:1620px;top:188px;width:48px;height:48px;background:#fff;border:1px solid #cbcbcb"></div>
<svg class="a" style="left:1568px;top:188px" width="100" height="48" viewBox="1568 188 100 48">
 <defs><radialGradient id="lens" cx=".45" cy=".4" r=".7"><stop offset="0" stop-color="#ffffff"/><stop offset="1" stop-color="#d4e0f0"/></radialGradient></defs>
 <path d="M1594 214 l8.5 8.5" stroke="#d4a040" stroke-width="5" stroke-linecap="round"/>
 <path d="M1594 214 l8.5 8.5" stroke="#f2d070" stroke-width="3" stroke-linecap="round"/>
 <circle cx="1586.8" cy="206.8" r="10.3" fill="url(#lens)" stroke="#a8b4d0" stroke-width="1.2"/>
 <path d="M1582.8 206.8 h8 M1586.8 202.8 v8" stroke="#8aaac8" stroke-width="1.5"/>
 <path d="M1646 214 l8.5 8.5" stroke="#d4a040" stroke-width="5" stroke-linecap="round"/>
 <path d="M1646 214 l8.5 8.5" stroke="#f2d070" stroke-width="3" stroke-linecap="round"/>
 <circle cx="1638.8" cy="206.8" r="10.3" fill="url(#lens)" stroke="#a8b4d0" stroke-width="1.2"/>
 <path d="M1634.8 206.8 h8" stroke="#8aaac8" stroke-width="1.5"/>
</svg>
<div class="a" style="left:1435px;top:242px;width:233px;height:199px;background:#e8e8e8"></div>
<div class="a" style="left:1453px;top:242px;width:197px;height:197px;background:#fff;border-left:2px solid #6e6e6e;border-top:2px solid #6e6e6e"></div>
<div class="a" style="left:1453px;top:441px;width:197px;height:17px;background:#e8e8e8"></div>
<div class="a" style="left:1453px;top:442px;width:17px;height:15px;background:#fff;border:1px solid #dadada"></div>
<div class="a" style="left:1471px;top:442px;width:8px;height:15px;background:#f4f4f4;border:1px solid #dadada"></div>
<div class="a" style="left:1634px;top:442px;width:17px;height:15px;background:#fff;border:1px solid #dadada"></div>
<svg class="a" style="left:1435px;top:242px" width="233" height="216" viewBox="1435 242 233 216">
 <path d="M1439 254 l4 -4 l4 4z M1439 432 l4 4 l4 -4z M1655 254 l4 -4 l4 4z M1655 432 l4 4 l4 -4z" fill="#c4c4c4"/>
 <path d="M1464.5 449.5 l-4 0 M1464 445.5 v8 l-5 -4z" fill="#555"/>
 <path d="M1639.5 445.5 v8 l5 -4z" fill="#555"/>
 <g fill="none" stroke="#000" stroke-width="1">
  <path d="M1509.5 301 V388.5 H1638.5 V294.5 H1631"/>
  <path d="M1513.5 301 V385.5 H1631.5 V301"/>
  <path d="M1590.5 301 V385.5 M1593.5 301 V385.5"/>
  <path d="M1513.5 315.5 H1590.5 M1593.5 315.5 H1617"/>
  <path d="M1527.5 301 V315.5 M1541.5 301 V315.5 M1555.5 301 V315.5 M1570.5 301 V315.5 M1584.5 301 V315.5 M1608.5 301 V315.5 M1615.5 301 V315.5"/>
  <path d="M1617.5 306.5 H1631.5 V330.5 H1617.5 Z"/>
  <path d="M1463 342.5 H1638"/>
  <path d="M1547.5 294 V338"/>
  <circle cx="1547.5" cy="342" r="3.6"/><path d="M1543.5 342.5 h8 M1547.5 338.5 v8" stroke-width=".8"/>
  <path d="M1591 334 Q1584 339 1579.5 345.5 Q1585 351 1591 354"/>
 </g>
 <path d="M1617.5 306 V330.5" stroke="#000" stroke-width="2"/>
 <circle cx="1591.5" cy="334" r="1.2" fill="#000"/><circle cx="1591.5" cy="354" r="1.2" fill="#000"/>
 <rect x="1463.5" y="294.5" width="167.5" height="6.5" fill="none" stroke="#108010" stroke-width="2"/>
</svg>
<div class="t" style="left:1434px;top:470px;font-size:10.5px">Clipping Plane:</div>
<div class="t" style="left:1434px;top:500px;font-size:10.5px">'View From' Height:</div>
<div class="t" style="left:1434px;top:530px;font-size:10.5px">'View To' Height:</div>
<div class="t" style="left:1434px;top:560px;font-size:10.5px">View Angle:</div>
<div class="inp" style="left:1570px;top:466px;width:98px;height:22px;border-color:#6a6a6a"></div>
<div class="t" style="left:1573px;top:469px;font-size:10.5px">1</div>
<div class="inp" style="left:1570px;top:496px;width:98px;height:22px;border-color:#6a6a6a;background:#f7f7f7"></div>
<div class="inp" style="left:1570px;top:526px;width:98px;height:22px;border-color:#6a6a6a;background:#f7f7f7"></div>
<div class="inp" style="left:1570px;top:556px;width:98px;height:22px;border-color:#6a6a6a;background:#f7f7f7"></div>

<!-- status bar -->
<div class="a" style="left:0;top:977px;width:1680px;height:33px;background:#f7961f"></div>
<!-- taskbar -->
<div class="a" style="left:0;top:1010px;width:1680px;height:40px;background:#393d45"></div>
<svg class="a" style="left:14px;top:1020px" width="20" height="20" viewBox="0 0 20 20">
 <path d="M1.5 3.2 L8.6 2.2 V9.3 H1.5Z M9.5 2.1 L18 0.9 V9.3 H9.5Z M1.5 10.2 H8.6 V17.3 L1.5 16.3Z M9.5 10.2 H18 V18.6 L9.5 17.4Z" fill="#fff"/>
</svg>
<div class="a" style="left:48px;top:1010px;width:344px;height:40px;background:#f2f2f2"></div>
<svg class="a" style="left:56px;top:1018px" width="24" height="24" viewBox="0 0 24 24">
 <circle cx="12" cy="12" r="9.2" fill="none" stroke="#000" stroke-width="2.2"/>
</svg>
<div class="t" style="left:88px;top:1021px;font-size:14.4px;line-height:18px;color:#222">Type here to search</div>
<svg class="a" style="left:363px;top:1020px" width="16" height="20" viewBox="0 0 16 20">
 <rect x="5" y="1.5" width="6" height="11" rx="3" fill="none" stroke="#333" stroke-width="1.1"/>
 <path d="M2.5 9.5 Q2.5 15 8 15 Q13.5 15 13.5 9.5 M8 15 V18 M5 18.5 H11" fill="none" stroke="#333" stroke-width="1.1"/>
</svg>
<svg class="a" style="left:400px;top:1012px" width="260" height="38" viewBox="400 1012 260 38">
 <rect x="409.5" y="1023.5" width="13" height="13" fill="none" stroke="#fff" stroke-width="1.3"/>
 <path d="M407.5 1026 h-1.5 v8 h1.5 M424.5 1026 h1.5 v8 h-1.5" fill="none" stroke="#fff" stroke-width="1.1"/>
 <circle cx="466.4" cy="1029.5" r="11" fill="#db4437"/>
 <path d="M466.4 1029.5 L476 1024 A11 11 0 0 1 472 1039 Z" fill="#f4c20d"/>
 <path d="M466.4 1029.5 L472 1039 A11 11 0 0 1 456.8 1024 Z" fill="#0f9d58"/>
 <circle cx="466.4" cy="1029" r="4.8" fill="#fff"/><circle cx="466.4" cy="1029" r="3.7" fill="#4285f4"/>
 <rect x="465.3" y="1028.4" width="15.2" height="14.7" fill="#e2a878" stroke="#333" stroke-width=".5"/>
 <path d="M466 1031 Q472 1028.5 480 1030 M467 1034.5 Q474 1032 479 1036.5 Q474 1038.5 466 1037.5 M466 1041 Q474 1039.5 480 1041" stroke="#111" stroke-width="1.5" fill="none"/>
 <rect x="505" y="1021.6" width="19" height="19.2" fill="#9ab848" stroke="#e8c820" stroke-width="1"/>
 <rect x="506" y="1034" width="17" height="6" fill="#7a9a30"/>
 <path d="M527.1 1027.3 L523.0 1028.4 L526.3 1031.0 L522.1 1030.4 L524.1 1034.1 L520.5 1031.8 L520.7 1036.0 L518.4 1032.5 L516.9 1036.4 L516.3 1032.2 L513.3 1035.3 L514.4 1031.2 L510.5 1032.7 L513.1 1029.4 L508.9 1029.2 L512.7 1027.3 L508.9 1025.4 L513.1 1025.2 L510.5 1021.9 L514.4 1023.4 L513.3 1019.3 L516.3 1022.4 L516.9 1018.2 L518.4 1022.1 L520.7 1018.6 L520.5 1022.8 L524.1 1020.5 L522.1 1024.2 L526.3 1023.6 L523.0 1026.2Z" fill="#f8d418" stroke="#c8a010" stroke-width=".5"/>
 <circle cx="517.9" cy="1027.3" r="3.6" fill="#a83a18"/>
 <circle cx="517.9" cy="1027.3" r="1.8" fill="#777"/>
 <path d="M554 1022 h6 l2 1.5 h13 v15 h-21z" fill="#f6d77a"/>
 <path d="M554 1025 h21 v13.6 h-21z" fill="#fbe49a"/>
 <path d="M555 1022.5 h4" stroke="#fff" stroke-width="1"/>
 <path d="M558 1039 v-7.5 h14 v7.5 h-3.5 v-3.5 h-7 v3.5z" fill="#2ba8e8"/>
 <rect x="590" y="1010" width="48" height="40" fill="#555963"/>
 <circle cx="614" cy="1030" r="12" fill="#f0b040"/>
 <path d="M614 1030 L622.5 1021.5 A12 12 0 0 1 622.5 1038.5 Z" fill="#e8a838"/>
 <rect x="610" y="1021" width="2.3" height="17" fill="#f6c860" stroke="#d89830" stroke-width=".4"/>
 <rect x="613.3" y="1021" width="2.6" height="14" fill="#e02828"/>
 <path d="M613.3 1035 h2.6 l-1.3 2.8z" fill="#f4f4f4"/>
 <rect x="447" y="1048" width="40" height="2" fill="#8e9cb8"/>
 <rect x="545" y="1048" width="40" height="2" fill="#8e9cb8"/>
 <rect x="590" y="1048" width="48" height="2" fill="#a4b0c8"/>
</svg>
<div class="t" style="left:1361px;top:1022px;font-size:12.2px;line-height:16px;color:#d8d8d8;letter-spacing:-0.2px">Desktop</div>
<svg class="a" style="left:1405px;top:1012px" width="275" height="38" viewBox="1405 1012 275 38">
 <path d="M1412 1017 l3 2.5 l-3 2.5 M1416 1017 l3 2.5 l-3 2.5" stroke="#fff" stroke-width="1.2" fill="none"/>
 <path d="M1431 1034.5 l6 -6.5 l6 6.5" stroke="#fff" stroke-width="1.3" fill="none"/>
 <path d="M1453 1027 h3 l4 -3.5 v13 l-4 -3.5 h-3z" fill="none" stroke="#fff" stroke-width="1.1"/>
 <path d="M1462.5 1027.5 q1.5 2.5 0 5 M1465 1025.5 q3 4.5 0 9 M1467.5 1023.5 q4.5 6.5 0 13" fill="none" stroke="#fff" stroke-width="1.1"/>
 <rect x="1477" y="1022" width="16" height="15.5" fill="#e01e26"/>
 <path d="M1480 1034 Q1483 1024 1486 1025 Q1488 1026 1485 1031 Q1487 1035 1491 1032" stroke="#fff" stroke-width="1.8" fill="none"/>
 <path d="M1503.5 1026.5 h13 v8 h-13z M1510 1034.5 v2.5 M1506 1037.5 h8" stroke="#fff" stroke-width="1.1" fill="none"/>
 <rect x="1501.5" y="1023.5" width="4" height="4" fill="#393d45" stroke="#fff" stroke-width="1"/>
 <path d="M1639.5 1022.5 h15 v12 h-5 l-2.5 3 l-2.5 -3 h-5z" fill="none" stroke="#fff" stroke-width="1.1"/>
 <rect x="1673" y="1012" width="1" height="38" fill="#5a5e66"/>
</svg>
<div class="t" style="left:1527px;top:1021px;font-size:12px;line-height:16px;color:#fff;letter-spacing:-0.9px">ENG</div>
<div class="t" style="left:1579px;top:1012px;font-size:12px;line-height:16px;color:#fff;letter-spacing:-0.6px">14:07</div>
<div class="t" style="left:1562px;top:1031px;font-size:12.2px;line-height:16px;color:#fff;letter-spacing:-0.4px">21/02/2018</div>
</body></html>
